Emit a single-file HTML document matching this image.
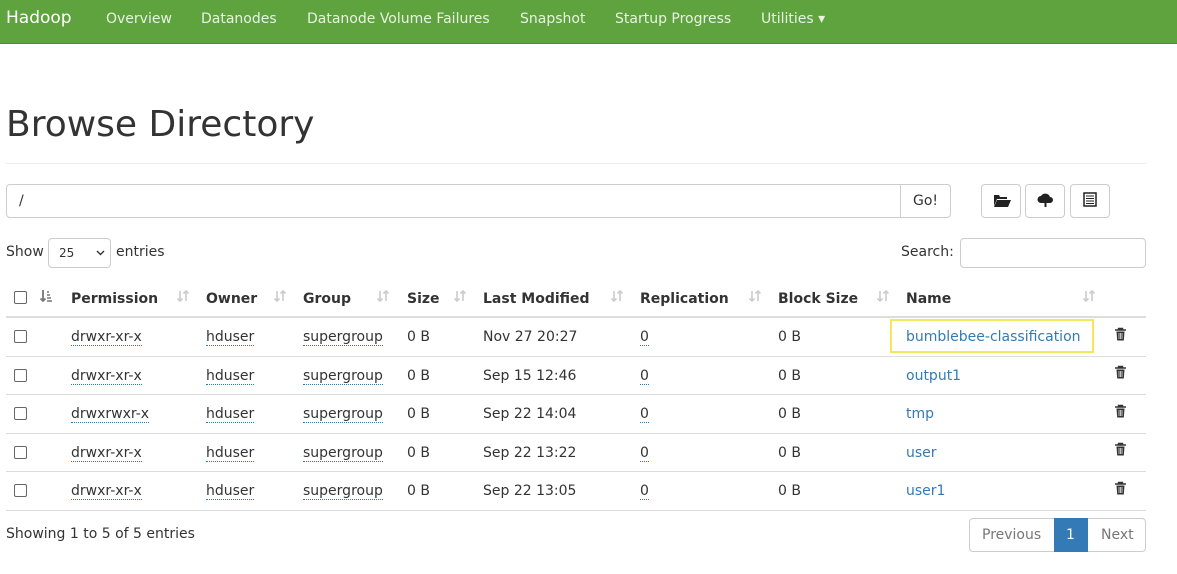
<!DOCTYPE html>
<html><head><style>
*{box-sizing:border-box;margin:0;padding:0}
body{width:1177px;height:574px;overflow:hidden;background:#fff;font-family:"DejaVu Sans","Liberation Sans",sans-serif;font-size:14px;color:#333;position:relative}
.a{position:absolute;white-space:nowrap}
.t{position:absolute;white-space:nowrap;margin-top:1px}
.nav{position:absolute;left:0;top:0;width:1177px;height:44px;background:#5fa33e;border-bottom:1px solid #4f8a33}
.nav span{position:absolute;top:11px;color:#e8f3e2;font-size:14px}
.cb{position:absolute;width:13px;height:13px;border:1.5px solid #666;border-radius:2px;background:#fff}
.ab{border-bottom:1px dotted #2a7ab8}
.hd{font-weight:bold;color:#333}
.ln{position:absolute;left:6px;width:1140px;height:1px;background:#ddd}
.lk{color:#337ab7}
.btn{position:absolute;border:1px solid #ccc;border-radius:4px;background:#fff}
.tr{position:absolute}
</style></head><body>
<svg width="0" height="0" style="position:absolute"><defs>
<g id="tr"><path d="M1 3h11M4.5 3V1.5h4V3" stroke="#333" stroke-width="1.4" fill="none"/><path d="M2.5 4.5h8l-.7 9h-6.6z" fill="#333"/><path d="M5 6v6M6.5 6v6M8 6v6" stroke="#fff" stroke-width=".7"/></g>
<g id="so"><path d="M3 1v10M0.5 8.5L3 11l2.5-2.5M9 11V1M6.5 3.5L9 1l2.5 2.5" stroke="#ccc" stroke-width="1.6" fill="none"/></g>
</defs></svg>
<div class="nav">
<span style="left:6px;top:8px;font-size:17px;color:#fff">Hadoop</span>
<span style="left:106px">Overview</span>
<span style="left:201px">Datanodes</span>
<span style="left:307px">Datanode Volume Failures</span>
<span style="left:520px">Snapshot</span>
<span style="left:615px">Startup Progress</span>
<span style="left:761px">Utilities ▾</span>
</div>
<div class="a" style="left:6px;top:104px;font-size:36px;color:#333">Browse Directory</div>
<div class="ln" style="top:163px;background:#eee"></div>
<div class="btn" style="left:6px;top:184px;width:896px;height:34px;border-radius:4px 0 0 4px"></div>
<div class="a" style="left:19px;top:193px">/</div>
<div class="btn" style="left:900px;top:184px;width:51px;height:34px;border-radius:0 4px 4px 0"></div>
<div class="a" style="left:913px;top:193px">Go!</div>
<div class="btn" style="left:981px;top:184px;width:40px;height:34px"></div>
<svg class="a" style="left:993px;top:194px" width="18" height="13" viewBox="0 0 18 13"><path d="M1 1h5l1 2h7v2H4L1 12z M4 6h14l-3 7H1z" fill="#222"/></svg>
<div class="btn" style="left:1025px;top:184px;width:40px;height:34px"></div>
<svg class="a" style="left:1037px;top:192px" width="17" height="16" viewBox="0 0 17 16"><path d="M4 11a3.5 3.5 0 0 1 0-7a5 5 0 0 1 9 1a3 3 0 0 1 0 6h-2l-2.5-3-2.5 3z" fill="#222"/><path d="M8.5 7l-3 4h2v4h2v-4h2z" fill="#222"/></svg>
<div class="btn" style="left:1070px;top:184px;width:40px;height:34px"></div>
<svg class="a" style="left:1083px;top:192px" width="14" height="15" viewBox="0 0 14 15"><rect x="1" y="1" width="12" height="13" fill="none" stroke="#222" stroke-width="1.5"/><path d="M3 4h8M3 6.5h8M3 9h8M3 11.5h8" stroke="#222"/></svg>
<div class="t" style="left:6px;top:243px">Show</div>
<div class="btn" style="left:48px;top:238px;width:63px;height:30px"></div>
<div class="a" style="left:59px;top:246px;font-size:12px">25</div>
<svg class="a" style="left:96px;top:250px" width="9" height="6" viewBox="0 0 9 6"><path d="M1 1l3.5 3.5L8 1" stroke="#333" stroke-width="1.4" fill="none"/></svg>
<div class="t" style="left:116px;top:243px">entries</div>
<div class="t" style="left:901px;top:243px">Search:</div>
<div class="btn" style="left:960px;top:238px;width:186px;height:30px"></div>
<div class="cb" style="left:14px;top:291px"></div>
<svg class="a" style="left:40px;top:290px" width="14" height="13" viewBox="0 0 14 13"><path d="M3 0v11M0.5 8.5L3 11l2.5-2.5" stroke="#777" stroke-width="1.8" fill="none"/><path d="M7 2h2M7 5h3M7 8h4M7 11h5" stroke="#777" stroke-width="1.5"/></svg>
<div class="t hd" style="left:71px;top:290px">Permission</div><svg class="tr" style="left:177px;top:290px" width="12" height="12"><use href="#so"/></svg>
<div class="t hd" style="left:206px;top:290px">Owner</div><svg class="tr" style="left:274px;top:290px" width="12" height="12"><use href="#so"/></svg>
<div class="t hd" style="left:303px;top:290px">Group</div><svg class="tr" style="left:377px;top:290px" width="12" height="12"><use href="#so"/></svg>
<div class="t hd" style="left:407px;top:290px">Size</div><svg class="tr" style="left:454px;top:290px" width="12" height="12"><use href="#so"/></svg>
<div class="t hd" style="left:483px;top:290px">Last Modified</div><svg class="tr" style="left:611px;top:290px" width="12" height="12"><use href="#so"/></svg>
<div class="t hd" style="left:640px;top:290px">Replication</div><svg class="tr" style="left:749px;top:290px" width="12" height="12"><use href="#so"/></svg>
<div class="t hd" style="left:778px;top:290px">Block Size</div><svg class="tr" style="left:877px;top:290px" width="12" height="12"><use href="#so"/></svg>
<div class="t hd" style="left:906px;top:290px">Name</div><svg class="tr" style="left:1083px;top:290px" width="12" height="12"><use href="#so"/></svg>
<div class="ln" style="top:316px;height:2px"></div>

<div class="a" style="left:890px;top:319px;width:204px;height:34px;border:2px solid #f3e85a"></div>

<div class="ln" style="top:356px"></div>
<div class="ln" style="top:394px"></div>
<div class="ln" style="top:433px"></div>
<div class="ln" style="top:471px"></div>
<div class="ln" style="top:510px"></div>

<div class="cb" style="left:14px;top:330px"></div>
<div class="t ab" style="left:71px;top:328px">drwxr-xr-x</div><div class="t ab" style="left:206px;top:328px">hduser</div><div class="t ab" style="left:303px;top:328px">supergroup</div>
<div class="t" style="left:407px;top:328px">0 B</div><div class="t" style="left:483px;top:328px">Nov 27 20:27</div><div class="t ab" style="left:640px;top:328px">0</div><div class="t" style="left:778px;top:328px">0 B</div>
<div class="t lk" style="left:906px;top:328px">bumblebee-classification</div><svg class="tr" style="left:1114px;top:327px" width="13" height="15"><use href="#tr"/></svg>

<div class="cb" style="left:14px;top:369px"></div>
<div class="t ab" style="left:71px;top:367px">drwxr-xr-x</div><div class="t ab" style="left:206px;top:367px">hduser</div><div class="t ab" style="left:303px;top:367px">supergroup</div>
<div class="t" style="left:407px;top:367px">0 B</div><div class="t" style="left:483px;top:367px">Sep 15 12:46</div><div class="t ab" style="left:640px;top:367px">0</div><div class="t" style="left:778px;top:367px">0 B</div>
<div class="t lk" style="left:906px;top:367px">output1</div><svg class="tr" style="left:1114px;top:365px" width="13" height="15"><use href="#tr"/></svg>

<div class="cb" style="left:14px;top:407px"></div>
<div class="t ab" style="left:71px;top:405px">drwxrwxr-x</div><div class="t ab" style="left:206px;top:405px">hduser</div><div class="t ab" style="left:303px;top:405px">supergroup</div>
<div class="t" style="left:407px;top:405px">0 B</div><div class="t" style="left:483px;top:405px">Sep 22 14:04</div><div class="t ab" style="left:640px;top:405px">0</div><div class="t" style="left:778px;top:405px">0 B</div>
<div class="t lk" style="left:906px;top:405px">tmp</div><svg class="tr" style="left:1114px;top:404px" width="13" height="15"><use href="#tr"/></svg>

<div class="cb" style="left:14px;top:446px"></div>
<div class="t ab" style="left:71px;top:444px">drwxr-xr-x</div><div class="t ab" style="left:206px;top:444px">hduser</div><div class="t ab" style="left:303px;top:444px">supergroup</div>
<div class="t" style="left:407px;top:444px">0 B</div><div class="t" style="left:483px;top:444px">Sep 22 13:22</div><div class="t ab" style="left:640px;top:444px">0</div><div class="t" style="left:778px;top:444px">0 B</div>
<div class="t lk" style="left:906px;top:444px">user</div><svg class="tr" style="left:1114px;top:442px" width="13" height="15"><use href="#tr"/></svg>

<div class="cb" style="left:14px;top:484px"></div>
<div class="t ab" style="left:71px;top:482px">drwxr-xr-x</div><div class="t ab" style="left:206px;top:482px">hduser</div><div class="t ab" style="left:303px;top:482px">supergroup</div>
<div class="t" style="left:407px;top:482px">0 B</div><div class="t" style="left:483px;top:482px">Sep 22 13:05</div><div class="t ab" style="left:640px;top:482px">0</div><div class="t" style="left:778px;top:482px">0 B</div>
<div class="t lk" style="left:906px;top:482px">user1</div><svg class="tr" style="left:1114px;top:481px" width="13" height="15"><use href="#tr"/></svg>

<div class="t" style="left:6px;top:525px">Showing 1 to 5 of 5 entries</div>
<div class="btn" style="left:969px;top:518px;width:177px;height:34px"></div>
<div class="t" style="left:982px;top:526px;color:#777">Previous</div>
<div class="a" style="left:1054px;top:518px;width:34px;height:34px;background:#337ab7"></div>
<div class="t" style="left:1066px;top:526px;color:#fff">1</div>
<div class="t" style="left:1101px;top:526px;color:#777">Next</div>
</body></html>
